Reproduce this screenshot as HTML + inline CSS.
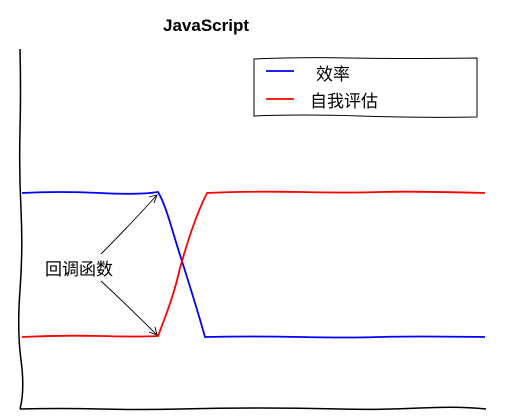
<!DOCTYPE html>
<html><head><meta charset="utf-8"><style>
body{margin:0;background:#fff;}
svg{display:block}
text{font-family:"Liberation Sans","Noto Sans CJK SC",sans-serif;}
</style></head><body>
<svg width="509" height="416" viewBox="0 0 509 416" xmlns="http://www.w3.org/2000/svg">
<text x="206" y="31" text-anchor="middle" font-size="17" font-weight="bold" fill="#000">JavaScript</text>
<path d="M20,49 Q21,90 20,130 T21,210 T20,290 T21,360 T20,409" fill="none" stroke="#000" stroke-width="1.5"/>
<path d="M20,409 Q60,408 100,409 T180,409 T260,408 T340,409 T420,408 T486,409" fill="none" stroke="#000" stroke-width="1.5"/>
<path d="M254,59 Q300,57 350,58 T477,58 L477,117 Q420,118 360,116 T254,116 Z" fill="#fff" stroke="#000" stroke-width="1"/>
<path d="M266,71 L294,71" stroke="#00f" stroke-width="1.8"/>
<path d="M266,99 L294,99" stroke="#f00" stroke-width="1.8"/>
<text x="316" y="80" font-size="17" fill="#000">效率</text>
<text x="310" y="107" font-size="17" fill="#000">自我评估</text>
<path d="M22,193 Q60,191 100,193 T158,192 C166,205 172,230 180,255 C188,280 196,305 205,337 Q250,336 300,337 T380,337 T485,337" fill="none" stroke="#00f" stroke-width="1.8"/>
<path d="M22,337 Q60,335 100,336 T158,336 C166,315 174,295 180,268 C188,240 196,215 207,193 Q250,191 300,192 T380,192 T485,193" fill="none" stroke="#f00" stroke-width="1.8"/>
<text x="45" y="275" font-size="17" fill="#000">回调函数</text>
<path d="M101,254 Q130,225 157,195 M149,197 L157,195 L154,203" fill="none" stroke="#000" stroke-width="0.9"/>
<path d="M101,281 Q130,308 157,335 M149,332 L157,335 L155,327" fill="none" stroke="#000" stroke-width="0.9"/>
</svg>
</body></html>
